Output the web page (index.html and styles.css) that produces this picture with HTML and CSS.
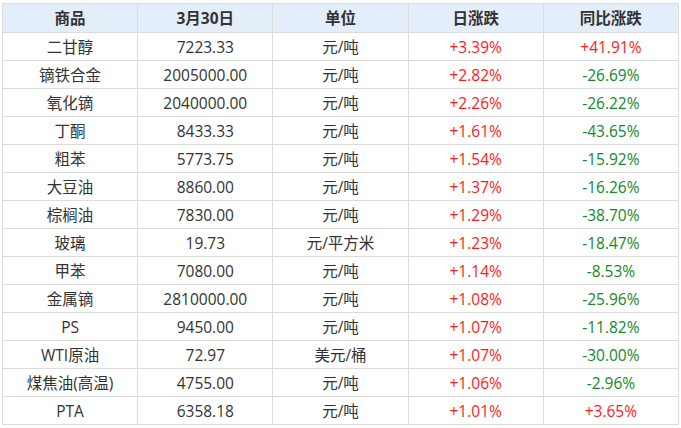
FILE: index.html
```html
<!DOCTYPE html>
<html lang="zh">
<head>
<meta charset="utf-8">
<link rel="stylesheet" href="styles.css">
</head>
<body>
<table class="price-table">
  <thead>
    <tr><th>商品</th><th>3月30日</th><th>单位</th><th>日涨跌</th><th>同比涨跌</th></tr>
  </thead>
  <tbody>
    <tr><td>二甘醇</td><td>7223.33</td><td>元/吨</td><td class="up">+3.39%</td><td class="up">+41.91%</td></tr>
    <tr><td>镝铁合金</td><td>2005000.00</td><td>元/吨</td><td class="up">+2.82%</td><td class="down">-26.69%</td></tr>
    <tr><td>氧化镝</td><td>2040000.00</td><td>元/吨</td><td class="up">+2.26%</td><td class="down">-26.22%</td></tr>
    <tr><td>丁酮</td><td>8433.33</td><td>元/吨</td><td class="up">+1.61%</td><td class="down">-43.65%</td></tr>
    <tr><td>粗苯</td><td>5773.75</td><td>元/吨</td><td class="up">+1.54%</td><td class="down">-15.92%</td></tr>
    <tr><td>大豆油</td><td>8860.00</td><td>元/吨</td><td class="up">+1.37%</td><td class="down">-16.26%</td></tr>
    <tr><td>棕榈油</td><td>7830.00</td><td>元/吨</td><td class="up">+1.29%</td><td class="down">-38.70%</td></tr>
    <tr><td>玻璃</td><td>19.73</td><td>元/平方米</td><td class="up">+1.23%</td><td class="down">-18.47%</td></tr>
    <tr><td>甲苯</td><td>7080.00</td><td>元/吨</td><td class="up">+1.14%</td><td class="down">-8.53%</td></tr>
    <tr><td>金属镝</td><td>2810000.00</td><td>元/吨</td><td class="up">+1.08%</td><td class="down">-25.96%</td></tr>
    <tr><td>PS</td><td>9450.00</td><td>元/吨</td><td class="up">+1.07%</td><td class="down">-11.82%</td></tr>
    <tr><td>WTI原油</td><td>72.97</td><td>美元/桶</td><td class="up">+1.07%</td><td class="down">-30.00%</td></tr>
    <tr><td>煤焦油(高温)</td><td>4755.00</td><td>元/吨</td><td class="up">+1.06%</td><td class="down">-2.96%</td></tr>
    <tr><td>PTA</td><td>6358.18</td><td>元/吨</td><td class="up">+1.01%</td><td class="up">+3.65%</td></tr>
  </tbody>
</table>
</body>
</html>
```
FILE: styles.css
```css
html, body {
  margin: 0;
  padding: 0;
  background: #fff;
}
body {
  padding: 3px 0 0 2px;
  font-family: "Open Sans", "Noto Sans CJK SC", sans-serif;
  font-size: 15.5px;
  color: #333;
}
.price-table {
  border-collapse: collapse;
  width: 677px;
  table-layout: fixed;
}
.price-table th,
.price-table td {
  border: 1px solid #dcdcdc;
  text-align: center;
  padding: 0;
  white-space: nowrap;
  line-height: 20px;
}
.price-table th {
  height: 28px;
  background: #e4edfa;
  font-weight: bold;
  color: #333;
}
.price-table td {
  height: 27px;
}
.up { color: #ff1a1a; }
.down { color: #118a2a; }
```
